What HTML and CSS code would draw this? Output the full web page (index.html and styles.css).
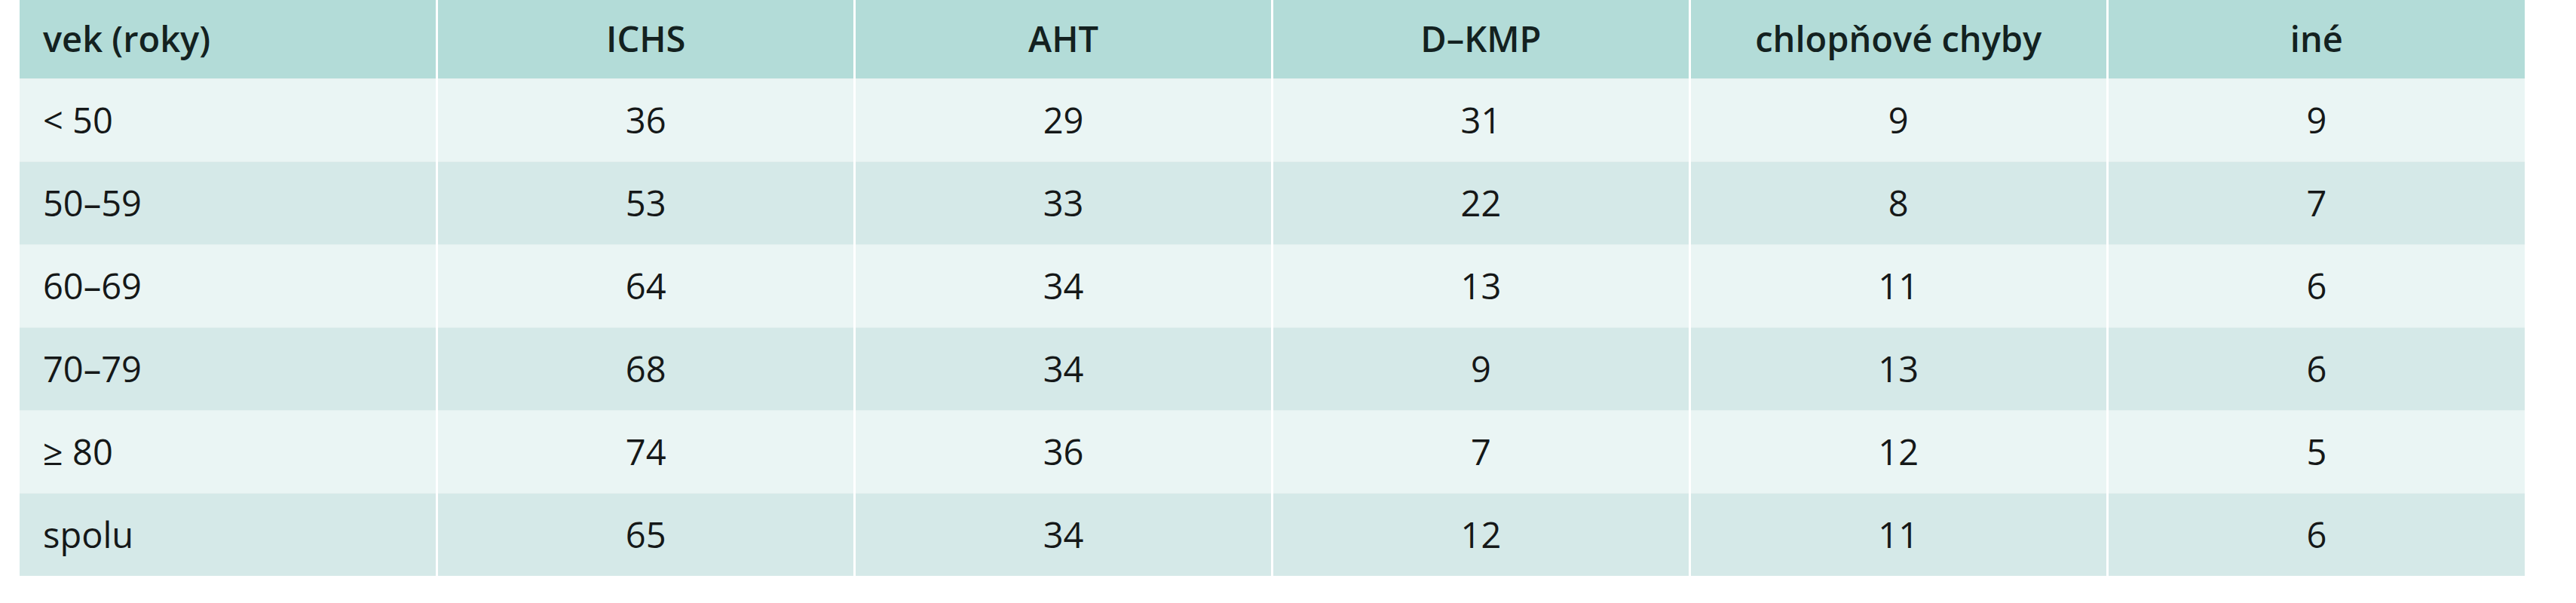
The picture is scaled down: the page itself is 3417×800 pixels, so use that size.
FILE: index.html
```html
<!DOCTYPE html>
<html lang="sk">
<head>
<meta charset="utf-8">
<title>Tabuľka</title>
<link rel="stylesheet" href="styles.css">
</head>
<body>
<table class="data">
  <thead>
    <tr class="head">
      <th class="first">vek (roky)</th>
      <th>ICHS</th>
      <th>AHT</th>
      <th>D–KMP</th>
      <th>chlopňové chyby</th>
      <th>iné</th>
    </tr>
  </thead>
  <tbody>
    <tr class="light"><td class="first">&lt; 50</td><td>36</td><td>29</td><td>31</td><td>9</td><td>9</td></tr>
    <tr class="dark"><td class="first">50–59</td><td>53</td><td>33</td><td>22</td><td>8</td><td>7</td></tr>
    <tr class="light"><td class="first">60–69</td><td>64</td><td>34</td><td>13</td><td>11</td><td>6</td></tr>
    <tr class="dark"><td class="first">70–79</td><td>68</td><td>34</td><td>9</td><td>13</td><td>6</td></tr>
    <tr class="light"><td class="first">≥ 80</td><td>74</td><td>36</td><td>7</td><td>12</td><td>5</td></tr>
    <tr class="dark"><td class="first">spolu</td><td>65</td><td>34</td><td>12</td><td>11</td><td>6</td></tr>
  </tbody>
</table>
</body>
</html>
```
FILE: styles.css
```css
html, body {
  margin: 0;
  padding: 0;
  background: #ffffff;
}

body {
  padding: 0 0 0 26px;
  font-family: "Open Sans", Lato, "Liberation Sans", sans-serif;
  color: #151818;
}

.data {
  width: 3323px;
  table-layout: fixed;
  border-collapse: collapse;
  font-size: 47px;
}

.data th,
.data td {
  text-align: center;
  vertical-align: middle;
  padding: 0;
  border-left: 3px solid #ffffff;
  line-height: 1;
}

.data th:first-child,
.data td:first-child {
  border-left: none;
}

.data .first {
  text-align: left;
  padding-left: 31px;
}

.head {
  background: #b3dcd8;
  height: 104px;
}

.head th {
  font-weight: 600;
  color: #132120;
}

.light {
  background: #eaf5f4;
  height: 110px;
}

.dark {
  background: #d5e9e8;
  height: 110px;
}

.data tbody td {
  font-weight: 400;
  border-top: 1px solid #e4f0ef;
}
```
